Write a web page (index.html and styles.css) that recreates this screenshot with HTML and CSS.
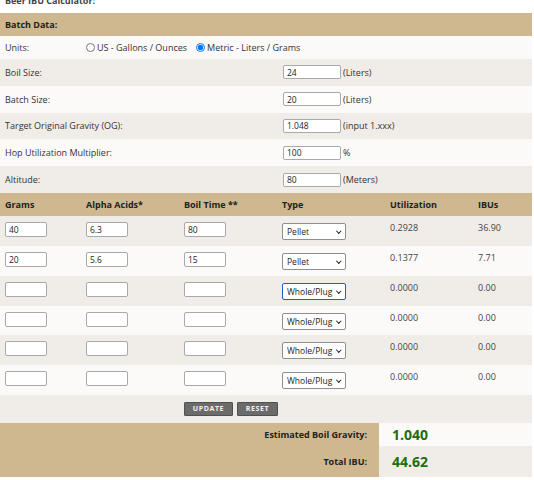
FILE: index.html
```html
<!DOCTYPE html>
<html lang="en">
<head>
<meta charset="utf-8">
<title>Beer IBU Calculator</title>
<link rel="stylesheet" href="styles.css">
</head>
<body>
<div class="calc">
  <div class="title">Beer IBU Calculator:</div>

  <div class="row band"><div class="cell span6">Batch Data:</div></div>

  <div class="row light short">
    <div class="cell">Units:</div>
    <div class="cell span5 radios">
      <label class="radio"><input type="radio" name="units">US - Gallons / Ounces</label>
      <label class="radio"><input type="radio" name="units" checked>Metric - Liters / Grams</label>
    </div>
  </div>

  <div class="row dark">
    <div class="cell span3">Boil Size:</div>
    <div class="cell span3 field"><input class="inp wide" type="text" value="24"><span class="unit">(Liters)</span></div>
  </div>
  <div class="row light">
    <div class="cell span3">Batch Size:</div>
    <div class="cell span3 field"><input class="inp wide" type="text" value="20"><span class="unit">(Liters)</span></div>
  </div>
  <div class="row dark">
    <div class="cell span3">Target Original Gravity (OG):</div>
    <div class="cell span3 field"><input class="inp wide" type="text" value="1.048"><span class="unit">(input 1.xxx)</span></div>
  </div>
  <div class="row light">
    <div class="cell span3">Hop Utilization Multiplier:</div>
    <div class="cell span3 field"><input class="inp wide" type="text" value="100"><span class="unit">%</span></div>
  </div>
  <div class="row dark">
    <div class="cell span3">Altitude:</div>
    <div class="cell span3 field"><input class="inp wide" type="text" value="80"><span class="unit">(Meters)</span></div>
  </div>

  <div class="row band">
    <div class="cell">Grams</div>
    <div class="cell">Alpha Acids*</div>
    <div class="cell">Boil Time **</div>
    <div class="cell">Type</div>
    <div class="cell">Utilization</div>
    <div class="cell">IBUs</div>
  </div>

  <div class="row hop dark">
    <div class="cell"><input class="inp" type="text" value="40"></div>
    <div class="cell"><input class="inp" type="text" value="6.3"></div>
    <div class="cell"><input class="inp" type="text" value="80"></div>
    <div class="cell"><span class="selwrap"><select class="sel"><option>Pellet</option><option>Whole/Plug</option></select></span></div>
    <div class="cell num">0.2928</div>
    <div class="cell num">36.90</div>
  </div>
  <div class="row hop light">
    <div class="cell"><input class="inp" type="text" value="20"></div>
    <div class="cell"><input class="inp" type="text" value="5.6"></div>
    <div class="cell"><input class="inp" type="text" value="15"></div>
    <div class="cell"><span class="selwrap"><select class="sel"><option>Pellet</option><option>Whole/Plug</option></select></span></div>
    <div class="cell num">0.1377</div>
    <div class="cell num">7.71</div>
  </div>
  <div class="row hop dark">
    <div class="cell"><input class="inp" type="text"></div>
    <div class="cell"><input class="inp" type="text"></div>
    <div class="cell"><input class="inp" type="text"></div>
    <div class="cell"><span class="selwrap"><select class="sel focused"><option>Whole/Plug</option><option>Pellet</option></select></span></div>
    <div class="cell num">0.0000</div>
    <div class="cell num">0.00</div>
  </div>
  <div class="row hop light">
    <div class="cell"><input class="inp" type="text"></div>
    <div class="cell"><input class="inp" type="text"></div>
    <div class="cell"><input class="inp" type="text"></div>
    <div class="cell"><span class="selwrap"><select class="sel"><option>Whole/Plug</option><option>Pellet</option></select></span></div>
    <div class="cell num">0.0000</div>
    <div class="cell num">0.00</div>
  </div>
  <div class="row hop dark">
    <div class="cell"><input class="inp" type="text"></div>
    <div class="cell"><input class="inp" type="text"></div>
    <div class="cell"><input class="inp" type="text"></div>
    <div class="cell"><span class="selwrap"><select class="sel"><option>Whole/Plug</option><option>Pellet</option></select></span></div>
    <div class="cell num">0.0000</div>
    <div class="cell num">0.00</div>
  </div>
  <div class="row hop light">
    <div class="cell"><input class="inp" type="text"></div>
    <div class="cell"><input class="inp" type="text"></div>
    <div class="cell"><input class="inp" type="text"></div>
    <div class="cell"><span class="selwrap"><select class="sel"><option>Whole/Plug</option><option>Pellet</option></select></span></div>
    <div class="cell num">0.0000</div>
    <div class="cell num">0.00</div>
  </div>

  <div class="row dark buttons">
    <div class="cell span2"></div>
    <div class="cell span4 btns">
      <button class="btn update" type="button">UPDATE</button>
      <button class="btn reset" type="button">RESET</button>
    </div>
  </div>

  <div class="result r1">
    <div class="res-label">Estimated Boil Gravity:</div>
    <div class="res-val">1.040</div>
  </div>
  <div class="result r2">
    <div class="res-label">Total IBU:</div>
    <div class="res-val">44.62</div>
  </div>
</div>
</body>
</html>
```
FILE: styles.css
```css
html, body {
  margin: 0;
  padding: 0;
  background: #ffffff;
}
body {
  font-family: "Open Sans", "Noto Sans", "DejaVu Sans", sans-serif;
  font-size: 9px;
  color: #333333;
  overflow: hidden;
}
.calc {
  width: 532px;
}
.title {
  margin-top: -3px;
  height: 16px;
  line-height: 8px;
  padding-left: 5px;
  font-weight: 700;
  color: #444444;
}
.row {
  display: grid;
  grid-template-columns: 81px 98px 98px 108px 88px 59px;
  align-items: center;
  height: 26.8px;
  box-sizing: border-box;
}
.row.short {
  height: 23px;
}
.light {
  background: #fbfaf8;
}
.dark {
  background: #f0ece8;
}
.band {
  background: #cfb78f;
  height: 23px;
  font-weight: 700;
  color: #222222;
}
.cell {
  padding-left: 5px;
  min-width: 0;
  white-space: nowrap;
}
.span2 { grid-column: span 2; }
.span3 { grid-column: span 3; }
.span4 { grid-column: span 4; }
.span5 { grid-column: span 5; }
.span6 { grid-column: span 6; }

.radios {
  display: flex;
  align-items: center;
  gap: 9px;
}
.radio {
  display: flex;
  align-items: center;
}
.radio input {
  width: 9px;
  height: 9px;
  margin: 0 2px 0 0;
}
.field {
  display: flex;
  align-items: center;
  padding-left: 6px;
}
.unit {
  margin-left: 2px;
}
.inp {
  box-sizing: border-box;
  width: 42px;
  height: 15px;
  padding: 0 3px;
  margin: 0;
  border: 1px solid #a9a9a9;
  border-radius: 2px;
  background: #ffffff;
  font-family: "Open Sans", "Noto Sans", sans-serif;
  font-size: 8.5px;
  color: #222222;
}
.inp.wide {
  width: 58px;
  height: 14px;
}
.hop {
  height: 29.85px;
  align-items: start;
  padding-top: 6px;
}
.num {
  line-height: 12px;
  color: #444444;
}
.selwrap {
  position: relative;
  display: inline-block;
  margin-top: 1px;
}
.selwrap::after {
  content: "";
  position: absolute;
  right: 6px;
  top: 6px;
  width: 2.5px;
  height: 2.5px;
  border-right: 1.5px solid #222222;
  border-bottom: 1.5px solid #222222;
  transform: rotate(45deg);
  pointer-events: none;
}
.sel {
  -webkit-appearance: none;
  appearance: none;
  display: block;
  box-sizing: border-box;
  width: 64px;
  height: 17px;
  margin: 0;
  padding: 0 12px 0 4px;
  border: 1px solid #8f8f8f;
  border-radius: 2px;
  background: #ffffff;
  font-family: "Open Sans", "Noto Sans", sans-serif;
  font-size: 8.5px;
  color: #222222;
}
.sel.focused {
  border-color: #1565c0;
}
.buttons {
  height: 28px;
}
.btns {
  display: flex;
  gap: 4px;
}
.btn {
  box-sizing: border-box;
  height: 14px;
  padding: 0;
  margin: 0;
  border: 1px solid #505050;
  border-radius: 1px;
  background: #6b6b6b;
  color: #f2f2f2;
  font-family: "Open Sans", "Noto Sans", sans-serif;
  font-size: 7px;
  font-weight: 700;
  letter-spacing: 0.6px;
  line-height: 12px;
}
.btn.update { width: 49px; }
.btn.reset { width: 41px; }

.result {
  display: flex;
  align-items: stretch;
}
.result.r1 { height: 23px; }
.result.r2 { height: 31px; }
.res-label {
  width: 379px;
  box-sizing: border-box;
  background: #cfb78f;
  padding-right: 12px;
  text-align: right;
  font-weight: 700;
  color: #222222;
  display: flex;
  align-items: center;
  justify-content: flex-end;
}
.res-val {
  flex: 1;
  padding-left: 13px;
  display: flex;
  align-items: center;
  font-size: 14px;
  font-weight: 700;
  color: #1f6e0b;
}
.r1 .res-val { background: #fbfaf8; }
.r2 .res-val { background: #f0ece8; }
```
